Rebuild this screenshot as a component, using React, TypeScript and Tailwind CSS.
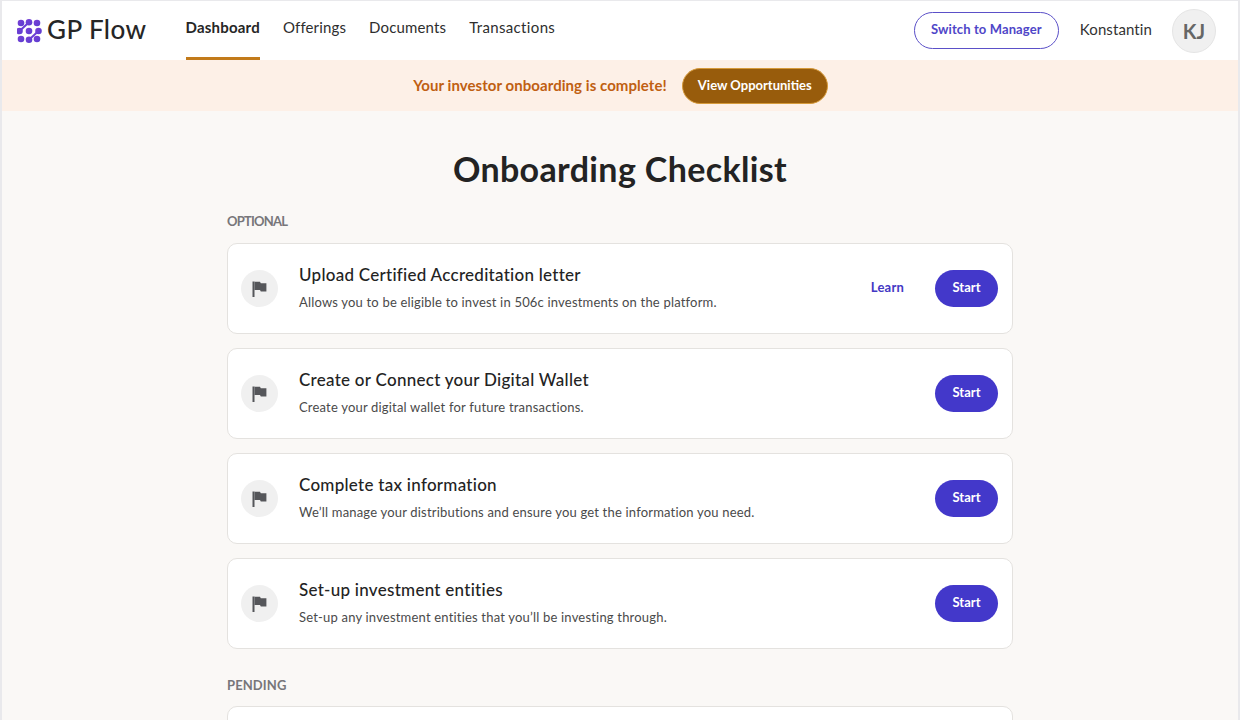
const font = "font-['Lato','Liberation_Sans',sans-serif]";

function Logo() {
  const dots = [
    [21, 22, 3.3], [29, 21.3, 3.3], [37, 22, 3.3],
    [19.5, 30, 3.3], [29, 30, 3.3], [38.5, 30, 3.3],
    [21, 38, 3.3], [29, 38.7, 3.3], [37, 38, 3.3],
  ];
  return (
    <svg width="25" height="26" viewBox="17 17 25 26" className="shrink-0">
      <defs>
        <linearGradient id="lg" x1="0" y1="0" x2="1" y2="1">
          <stop offset="0" stopColor="#7a3fd6" />
          <stop offset="1" stopColor="#5a3ed0" />
        </linearGradient>
      </defs>
      {dots.map(([x, y, r], i) => (
        <circle key={i} cx={x} cy={y} r={r} fill="url(#lg)" />
      ))}
      <path d="M19.5 30 L29 21.3 M29 38.7 L38.5 30" stroke="#6a3fd4" strokeWidth="2" />
    </svg>
  );
}

function Flag() {
  return (
    <svg width="15" height="16" viewBox="0 0 15 16" fill="#55565a">
      <rect x="0.5" y="0.5" width="2" height="15.5" />
      <path d="M2.5 0.8 H8 L8.8 2.2 H14.4 V10.4 H8.8 L8 9 H2.5 Z" />
    </svg>
  );
}

function Card({ title, desc, learn }: { title: string; desc: string; learn?: boolean }) {
  return (
    <div className="flex h-[91px] items-center rounded-[10px] border border-[#e4e2df] bg-white pl-[13px] pr-[14px]">
      <div className="flex h-[37px] w-[37px] shrink-0 items-center justify-center rounded-full bg-[#f0f0f0]">
        <Flag />
      </div>
      <div className="ml-[21px] flex-1 pb-[3px]">
        <div className="text-[17px] font-medium leading-[24px] tracking-[0.27px] text-[#232323]">{title}</div>
        <div className="mt-[6px] text-[13px] leading-[18px] tracking-[0.19px] text-[#4a4a4a]">{desc}</div>
      </div>
      {learn && <span className="mr-[31px] pb-[2px] text-[13px] font-bold tracking-[0.2px] text-[#4338c4]">Learn</span>}
      <button className="h-[37px] w-[63px] rounded-full bg-[#4338ca] pb-[2px] text-[13px] font-bold text-white">Start</button>
    </div>
  );
}

export default function App() {
  return (
    <div className={`${font} h-[720px] overflow-hidden bg-[#e9e9ec] px-[2px]`}>
      <header className="flex h-[60px] items-center border-t border-[#e9e9ec] bg-white pl-[15px] pr-[22px]">
        <Logo />
        <span className="mb-[2px] ml-[5px] text-[26px] font-medium tracking-[0.45px] text-[#262626]">GP Flow</span>
        <nav className="ml-[39px] flex h-full items-stretch gap-[23px] text-[15px] tracking-[0.15px] text-[#2e2e2e]">
          <a className="flex items-center border-b-[3px] border-[#c27a1a] pb-[3px] font-bold tracking-[0.2px] text-[#262626]">Dashboard</a>
          <a className="flex items-center pb-[6px]">Offerings</a>
          <a className="flex items-center pb-[6px]">Documents</a>
          <a className="flex items-center pb-[6px] tracking-[0.35px]">Transactions</a>
        </nav>
        <div className="ml-auto flex items-center">
          <button className="mb-[1px] h-[37px] w-[145px] rounded-full border border-[#5b50c8] pb-[1px] text-[13px] font-bold tracking-[0.12px] text-[#4f46c8]">
            Switch to Manager
          </button>
          <span className="ml-[21px] pb-[3px] text-[15px] tracking-[0.1px] text-[#333333]">Konstantin</span>
          <div className="ml-[20px] flex h-[44px] w-[44px] items-center justify-center rounded-full border border-[#e5e5e5] bg-[#f0f0f0] text-[20px] font-bold text-[#666666]">
            KJ
          </div>
        </div>
      </header>
      <div className="flex h-[51px] items-center justify-center gap-[15px] bg-[#fdf0e7] pl-[1px]">
        <span className="text-[15px] font-bold tracking-[0.06px] text-[#c05f12]">Your investor onboarding is complete!</span>
        <button className="mt-[1px] h-[36px] w-[146px] rounded-full border border-[#d69a3a] bg-[#985c0c] pb-[1px] text-[13px] font-bold text-white">
          View Opportunities
        </button>
      </div>
      <main className="h-full bg-[#faf8f6]">
        <div className="mx-auto w-[786px]">
          <h1 className="pt-[38px] text-center text-[34px] font-bold leading-[40px] tracking-[0.36px] text-[#232323]">
            Onboarding Checklist
          </h1>
          <div className="mt-[23px] text-[13px] font-bold leading-[18px] tracking-[-0.8px] text-[#77767a]">OPTIONAL</div>
          <div className="mt-[13px] flex flex-col gap-[14px]">
            <Card learn title="Upload Certified Accreditation letter" desc="Allows you to be eligible to invest in 506c investments on the platform." />
            <Card title="Create or Connect your Digital Wallet" desc="Create your digital wallet for future transactions." />
            <Card title="Complete tax information" desc="We’ll manage your distributions and ensure you get the information you need." />
            <Card title="Set-up investment entities" desc="Set-up any investment entities that you’ll be investing through." />
          </div>
          <div className="mt-[27px] text-[13px] font-bold leading-[18px] tracking-[0.1px] text-[#77767a]">PENDING</div>
          <div className="mt-[12px] h-[91px] rounded-[10px] border border-[#e4e2df] bg-white" />
        </div>
      </main>
    </div>
  );
}
